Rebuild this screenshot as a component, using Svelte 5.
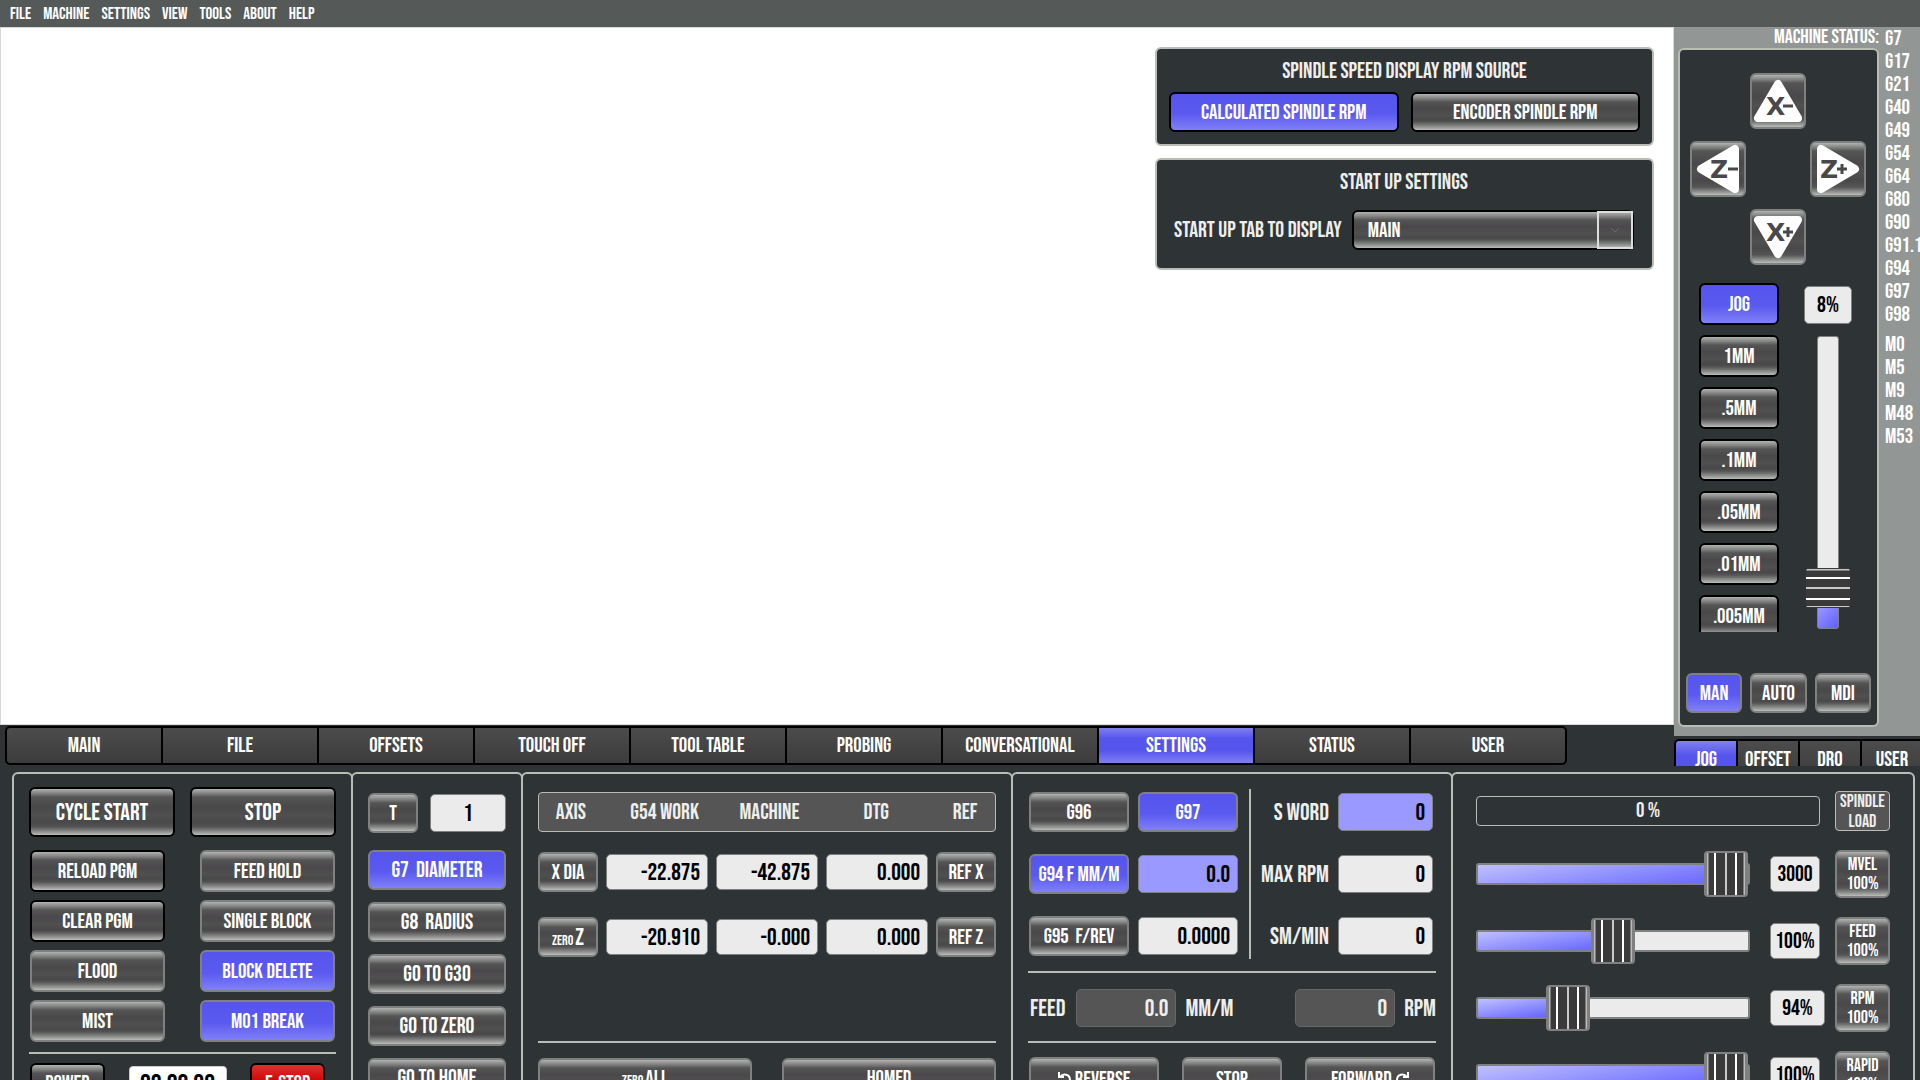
<script>
	let menus = ['File', 'Machine', 'Settings', 'View', 'Tools', 'About', 'Help'];
	let tabs = ['Main', 'File', 'Offsets', 'Touch Off', 'Tool Table', 'Probing', 'Conversational', 'Settings', 'Status', 'User'];
	let sideTabs = ['Jog', 'Offset', 'DRO', 'User'];
	let gcodes = ['G7', 'G17', 'G21', 'G40', 'G49', 'G54', 'G64', 'G80', 'G90', 'G91.1', 'G94', 'G97', 'G98'];
	let mcodes = ['M0', 'M5', 'M9', 'M48', 'M53'];
	let steps = ['Jog', '1mm', '.5mm', '.1mm', '.05mm', '.01mm', '.005mm'];
	let modes = ['Man', 'Auto', 'MDI'];

	let tab = $state('Settings');
	let sideTab = $state('Jog');
	let step = $state('Jog');
	let mode = $state('Man');
	let rpmSource = $state('calculated');
	let startTab = $state('Main');
	let jogSpeed = $state(8);

	let jogKeys = [
		{ name: 'X-', area: 'up', tri: '28,11 8,45 48,45', x: 16, y: 42, sx: 38, sy: 33 },
		{ name: 'Z-', area: 'left', tri: '11,28 45,8 45,48', x: 20, y: 37, sx: 43, sy: 28 },
		{ name: 'Z+', area: 'right', tri: '45,28 11,8 11,48', x: 10, y: 37, sx: 32, sy: 28 },
		{ name: 'X+', area: 'down', tri: '28,45 8,11 48,11', x: 16, y: 32, sx: 38, sy: 23 }
	];

	let programKeys = [
		{ name: 'Reload PGM', dark: true },
		{ name: 'Feed Hold' },
		{ name: 'Clear PGM', dark: true },
		{ name: 'Single Block' },
		{ name: 'Flood' },
		{ name: 'Block Delete', on: true },
		{ name: 'Mist' },
		{ name: 'M01 Break', on: true }
	];

	let toolKeys = [
		{ name: 'G7\u00a0 Diameter', on: true },
		{ name: 'G8\u00a0 Radius' },
		{ name: 'Go to G30' },
		{ name: 'Go to Zero' },
		{ name: 'Go to Home' }
	];

	let axes = [
		{ axis: 'X', work: '-22.875', machine: '-42.875', dtg: '0.000' },
		{ axis: 'Z', work: '-20.910', machine: '-0.000', dtg: '0.000' }
	];

	let overrides = $state([
		{ name: 'MVel', pos: 100, value: '3000' },
		{ name: 'Feed', pos: 50, value: '100%' },
		{ name: 'RPM', pos: 30, value: '94%', wide: true },
		{ name: 'Rapid', pos: 100, value: '100%' }
	]);
</script>

<div class="app">
	<nav class="menubar">
		{#each menus as item}
			<button>{item}</button>
		{/each}
	</nav>

	<div class="upper">
		<main>
			<div class="page">
				<section class="box">
					<h2>Spindle Speed Display RPM Source</h2>
					<div class="source">
						<button class="btn dark" class:on={rpmSource == 'calculated'} onclick={() => (rpmSource = 'calculated')}>Calculated Spindle RPM</button>
						<button class="btn dark" class:on={rpmSource == 'encoder'} onclick={() => (rpmSource = 'encoder')}>Encoder Spindle RPM</button>
					</div>
				</section>
				<section class="box startup">
					<h2>Start Up Settings</h2>
					<div class="field">
						<label for="start-tab">Start Up Tab to Display</label>
						<div class="select">
							<select id="start-tab" class="btn dark" bind:value={startTab}>
								{#each tabs as name}
									<option>{name}</option>
								{/each}
							</select>
							<span class="drop">
								<svg viewBox="0 0 10 6" width="10" height="6"><path d="M1 1l4 4 4-4" fill="none" stroke="#6a6a6a" /></svg>
							</span>
						</div>
					</div>
				</section>
			</div>
			<div class="tabs">
				{#each tabs as name}
					<button class:active={tab == name} onclick={() => (tab = name)}>{name}</button>
				{/each}
			</div>
		</main>

		<aside>
			<div class="side">
				<div class="jog-col">
					<p class="status-label">Machine Status:</p>
					<div class="jog">
						<div class="keys">
							{#each jogKeys as key}
								<button class="btn key {key.area}" aria-label="Jog {key.name}">
									<svg viewBox="2 2 52 52" width="52" height="52">
										<polygon points={key.tri} fill="#fff" stroke="#fff" stroke-width="8" stroke-linejoin="round" />
										<text x={key.x} y={key.y}>{key.name[0]}</text>
										<path d="M{key.sx - 5} {key.sy}h10" />
										{#if key.name[1] == '+'}
											<path d="M{key.sx} {key.sy - 5}v10" />
										{/if}
									</svg>
								</button>
							{/each}
						</div>
						<div class="increments">
							<div class="steps">
								{#each steps as name}
									<button class="btn dark" class:on={step == name} onclick={() => (step = name)}>{name}</button>
								{/each}
							</div>
							<div class="speed">
								<input class="value center" aria-label="Jog speed value" value="{jogSpeed}%" />
								<input class="vslider" type="range" aria-label="Jog speed" bind:value={jogSpeed} style:--pos={jogSpeed} />
							</div>
						</div>
						<div class="modes">
							{#each modes as name}
								<button class="btn" class:on={mode == name} onclick={() => (mode = name)}>{name}</button>
							{/each}
						</div>
					</div>
				</div>
				<div class="codes">
					<ul>
						{#each gcodes as code}<li>{code}</li>{/each}
					</ul>
					<ul>
						{#each mcodes as code}<li>{code}</li>{/each}
					</ul>
				</div>
			</div>
			<div class="side-tabs">
				{#each sideTabs as name}
					<button class:active={sideTab == name} onclick={() => (sideTab = name)}>{name}</button>
				{/each}
			</div>
		</aside>
	</div>

	<div class="lower">
		<section class="panel program">
			<div class="cycle">
				<button class="btn dark big">Cycle Start</button>
				<button class="btn dark big">Stop</button>
			</div>
			<div class="program-keys">
				{#each programKeys as key}
					<button class="btn" class:dark={key.dark} class:on={key.on}>{key.name}</button>
				{/each}
			</div>
			<hr />
			<div class="power">
				<button class="btn dark">Power</button>
				<output class="timer">00:00:00</output>
				<button class="btn dark estop">E-Stop</button>
			</div>
		</section>

		<section class="panel tool">
			<div class="tool-row">
				<button class="btn">T</button>
				<input class="value center" aria-label="Tool number" value="1" />
			</div>
			{#each toolKeys as key}
				<button class="btn" class:on={key.on}>{key.name}</button>
			{/each}
		</section>

		<section class="panel dro">
			<table>
				<thead>
					<tr>
						<th>Axis</th>
						<th>G54 Work</th>
						<th>Machine</th>
						<th>DTG</th>
						<th>Ref</th>
					</tr>
				</thead>
				<tbody>
					{#each axes as row}
						<tr>
							<td>
								<button class="btn">
									{#if row.axis == 'X'}X Dia{:else}<small>Zero</small><span class="z">Z</span>{/if}
								</button>
							</td>
							<td><input class="value" aria-label="{row.axis} work" value={row.work} /></td>
							<td><input class="value" aria-label="{row.axis} machine" value={row.machine} /></td>
							<td><input class="value" aria-label="{row.axis} distance to go" value={row.dtg} /></td>
							<td><button class="btn">Ref {row.axis}</button></td>
						</tr>
					{/each}
				</tbody>
			</table>
			<hr />
			<div class="all">
				<button class="btn"><small>Zero</small>All</button>
				<button class="btn">Homed</button>
			</div>
		</section>

		<section class="panel spindle">
			<div class="spindle-top">
				<div class="feed-modes">
					<button class="btn">G96</button>
					<button class="btn on">G97</button>
					<button class="btn on">G94 F mm/m</button>
					<input class="value lit" aria-label="Feed per minute" value="0.0" />
					<button class="btn">G95&nbsp; F/Rev</button>
					<input class="value" aria-label="Feed per rev" value="0.0000" />
				</div>
				<div class="words">
					<label for="s-word">S Word</label>
					<input id="s-word" class="value lit" value="0" />
					<label for="max-rpm">Max RPM</label>
					<input id="max-rpm" class="value" value="0" />
					<label for="sm-min">SM/Min</label>
					<input id="sm-min" class="value" value="0" />
				</div>
			</div>
			<hr />
			<div class="actual">
				<label for="feed">Feed</label>
				<input id="feed" class="value dim" readonly value="0.0" />
				<span>mm/m</span>
				<input id="rpm" class="value dim" readonly value="0" />
				<label for="rpm">RPM</label>
			</div>
			<hr />
			<div class="direction">
				<button class="btn">
					<svg viewBox="0 0 14 14" width="14" height="14"><path d="M2 5C5 1 12 2 12 8c0 3-2 4-4 5M1 0v5h5" /></svg>
					Reverse
				</button>
				<button class="btn">Stop</button>
				<button class="btn">
					Forward
					<svg viewBox="0 0 14 14" width="14" height="14"><path d="M12 5C9 1 2 2 2 8c0 3 2 4 4 5M13 0v5H8" /></svg>
				</button>
			</div>
		</section>

		<section class="panel overrides">
			<div class="load">
				<div class="bar">0 %</div>
				<div class="load-label">Spindle<br />Load</div>
			</div>
			{#each overrides as item}
				<div class="override">
					<input class="hslider" type="range" aria-label="{item.name} override" bind:value={item.pos} style:--pos={item.pos} />
					<div class="cell">
						<input class="value center" class:wide={item.wide} aria-label="{item.name} value" value={item.value} />
					</div>
					<button class="btn two">{item.name}<br />100%</button>
				</div>
			{/each}
		</section>
	</div>
</div>

<style>
	:global(body) {
		background: #2e3436;
		overflow: hidden;
	}
	.app {
		height: 100vh;
		overflow: hidden;
		display: flex;
		flex-direction: column;
		background: #2e3436;
		color: #eeeeec;
		font-family: 'Bebas Neue', 'Roboto Condensed', 'Liberation Sans', sans-serif;
		font-size: 21px;
		text-transform: uppercase;
	}
	* {
		box-sizing: border-box;
	}
	button,
	input,
	select {
		font: inherit;
		color: inherit;
		text-transform: inherit;
		margin: 0;
		padding: 0;
		min-width: 0;
	}
	h2,
	p,
	ul {
		margin: 0;
		padding: 0;
		list-style: none;
		font-weight: normal;
	}

	/* shared controls */
	.btn {
		height: 40px;
		border: 2px solid #808080;
		border-radius: 6px;
		color: #fff;
		white-space: nowrap;
		background: linear-gradient(#b0b3b0 0, #858785 4px, #555 8px, #4a484a 40%, #505050 58%, #4a484a 72%, #555 calc(100% - 8px), #858785 calc(100% - 4px), #babdb9 100%);
	}
	.btn.dark {
		border-color: #000;
	}
	.btn.on {
		background: linear-gradient(#5555ee, #5a5af0 55%, #8080f8);
	}
	.value {
		height: 38px;
		width: 100%;
		padding: 0 7px;
		border: 1px solid #808080;
		border-radius: 5px;
		background: #ebebeb;
		color: #000;
		font-size: 24px;
		text-align: right;
	}
	.value.center {
		padding: 0;
		text-align: center;
	}
	.value.lit {
		background: #9999ff;
	}
	.value.dim {
		background: #555;
		border-color: #666;
		color: #eeeeec;
	}
	hr {
		height: 2px;
		margin: 0;
		border: 0;
		background: #babdb6;
	}
	small {
		font-size: 14px;
		margin-right: 2px;
	}

	.menubar {
		display: flex;
		flex: none;
		gap: 12px;
		height: 27px;
		padding-left: 10px;
		background: #555a59;
	}
	.menubar button {
		border: 0;
		background: none;
		color: #fff;
		font-size: 17px;
	}

	/* upper half */
	.upper {
		display: flex;
		flex: none;
	}
	main {
		flex: 1;
		display: flex;
		flex-direction: column;
	}
	.page {
		flex: 1;
		display: flex;
		flex-direction: column;
		align-items: flex-end;
		gap: 12px;
		padding: 19px 19px 0 0;
		background: #fff;
		border: 1px solid #d8d8d8;
	}
	.box {
		width: 499px;
		padding: 12px;
		border: 2px solid #babdb6;
		border-radius: 6px;
		background: #2e3436;
		font-size: 22px;
	}
	.box h2 {
		font-size: 22px;
		line-height: 22px;
		text-align: center;
	}
	.box .btn {
		font-size: 21px;
	}
	.source {
		display: grid;
		grid-template-columns: 1fr 1fr;
		gap: 12px;
		margin-top: 9px;
	}
	.startup {
		padding: 12px 18px 18px 17px;
	}
	.field {
		display: flex;
		align-items: center;
		gap: 10px;
		margin-top: 16px;
	}
	.select {
		position: relative;
		flex: 1;
	}
	.select select {
		appearance: none;
		width: 100%;
		padding-left: 14px;
	}
	.drop {
		position: absolute;
		inset: 1px 1px 1px auto;
		width: 36px;
		display: flex;
		align-items: center;
		justify-content: center;
		border: 2px solid #ddd;
		pointer-events: none;
	}
	.tabs {
		display: flex;
		height: 39px;
		margin: 1px 107px 1px 5px;
		border: 2px solid #000;
		border-radius: 5px;
		overflow: hidden;
		background: #000;
		gap: 2px;
	}
	.tabs button,
	.side-tabs button {
		flex: 1 1 0;
		border: 0;
		color: #fff;
		background: linear-gradient(#4c4c4c, #3c3c3c);
	}
	.tabs .active {
		background: linear-gradient(#8080ee, #5555ee 30%, #5555ee 65%, #8080ee);
	}

	aside {
		width: 246px;
		overflow: hidden;
	}
	.side {
		display: flex;
		padding: 0 0 9px 4px;
		background: #929694;
		color: #fff;
	}
	.jog-col {
		width: 201px;
	}
	.status-label {
		height: 21px;
		font-size: 20px;
		line-height: 21px;
		text-align: right;
	}
	.jog {
		padding: 23px 6px 12px;
		border: 2px solid #babdb6;
		border-radius: 6px;
		background: #2e3436;
	}
	.keys {
		display: grid;
		grid-template: '. up .' 56px 'left . right' 56px '. down .' 56px / 56px 56px 56px;
		gap: 12px 4px;
		padding-left: 4px;
	}
	.key {
		height: 56px;
	}
	.key svg {
		display: block;
	}
	.key text {
		font: bold 25px 'DejaVu Sans', sans-serif;
		fill: #4a484a;
	}
	.key path {
		stroke: #4a484a;
		stroke-width: 3;
	}
	.up {
		grid-area: up;
	}
	.left {
		grid-area: left;
	}
	.right {
		grid-area: right;
	}
	.down {
		grid-area: down;
	}
	.increments {
		display: flex;
		justify-content: space-between;
		height: 349px;
		margin: 18px 19px 41px 13px;
		overflow: hidden;
	}
	.steps {
		display: flex;
		flex-direction: column;
		gap: 10px;
		width: 80px;
	}
	.steps .btn {
		flex: none;
		height: 42px;
	}
	.speed {
		width: 48px;
		display: flex;
		flex-direction: column;
		align-items: center;
		gap: 12px;
		padding-top: 3px;
	}
	.speed .value,
	.override .value {
		font-size: 22px;
	}
	.modes {
		display: flex;
		gap: 8px;
	}
	.modes .btn {
		flex: 1;
	}
	.codes {
		padding: 0 0 0 6px;
		width: 41px;
		line-height: 23px;
		white-space: nowrap;
	}
	.codes ul + ul {
		margin-top: 7px;
	}
	.side-tabs {
		display: flex;
		width: 250px;
		height: 27px;
		margin-top: 3px;
		border: 2px solid #000;
		border-bottom: 0;
		border-radius: 5px 0 0 0;
		gap: 2px;
		background: #000;
		overflow: hidden;
	}
	.side-tabs button {
		height: 36px;
	}
	.side-tabs .active {
		background: linear-gradient(#8080ee, #5555ee 40%);
	}

	/* sliders */
	input[type='range'] {
		appearance: none;
		background: none;
	}
	.hslider {
		flex: 1;
		height: 46px;
	}
	.hslider::-webkit-slider-runnable-track {
		height: 22px;
		border: 2px solid #808080;
		border-radius: 3px;
		background: linear-gradient(170deg, #c0c0ff, #5f5fff) no-repeat 0 0 / calc(var(--pos) * 1%) 100% #ebebeb;
	}
	.hslider::-webkit-slider-thumb {
		appearance: none;
		width: 44px;
		height: 46px;
		margin-top: -14px;
		border: 2px solid #808080;
		border-radius: 4px;
		background: linear-gradient(90deg, #808080 1px, #bbb 1px 2px, #3a3a3a 3px 8px, #fff 8px 10px, #3a3a3a 10px 19px, #c8c8c8 19px 21px, #3a3a3a 21px 29px, #fff 29px 31px, #3a3a3a 31px 37px, #bbb 38px 39px, #808080 39px);
	}
	.vslider {
		writing-mode: vertical-lr;
		direction: rtl;
		width: 44px;
		height: 293px;
	}
	.vslider::-webkit-slider-runnable-track {
		width: 22px;
		border: 1px solid #808080;
		border-radius: 3px;
		background: linear-gradient(135deg, #aaaaff, #5f5fff) no-repeat 0 100% / 100% calc(var(--pos) * 1% + 10px) #ebebeb;
	}
	.vslider::-webkit-slider-thumb {
		appearance: none;
		width: 44px;
		height: 40px;
		margin-left: -12px;
		border-radius: 4px;
		background: linear-gradient(#3a3a3a 1px, #c8c8c8 1px 2px, #3a3a3a 3px 9px, #fff 9px 11px, #3a3a3a 11px 19px, #c8c8c8 19px 21px, #3a3a3a 21px 30px, #fff 30px 32px, #3a3a3a 32px 38px, #c8c8c8 38px 39px, #3a3a3a 39px);
	}

	/* lower half */
	.lower {
		flex: none;
		display: grid;
		grid-template-columns: 339fr 170fr 490fr 440fr 464fr;
		padding: 6px 5px 0 12px;
	}
	.panel {
		min-width: 0;
		padding: 13px 15px;
		border: 2px solid #babdb6;
		border-radius: 6px;
	}
	.panel:not(:last-child) {
		margin-right: -2px;
	}
	.cycle {
		display: grid;
		grid-template-columns: 1fr 1fr;
		gap: 15px;
	}
	.big {
		height: 50px;
		font-size: 24px;
	}
	.program-keys {
		display: grid;
		grid-template-columns: 135px 135px;
		justify-content: space-between;
		gap: 8px;
		padding: 13px 1px 10px;
	}
	.program-keys .btn {
		height: 42px;
	}
	.power {
		display: flex;
		justify-content: space-between;
		padding: 9px 11px 0 1px;
	}
	.power .btn {
		width: 75px;
	}
	.power .estop {
		background: linear-gradient(#e03030, #cc0000 50%);
	}
	.timer {
		width: 98px;
		height: 38px;
		margin-top: 3px;
		border: 1px solid #ccc;
		border-radius: 4px;
		background: #fff;
		color: #000;
		font-size: 27px;
		line-height: 36px;
		text-align: center;
	}

	.tool {
		display: flex;
		flex-direction: column;
		gap: 12px;
		padding-top: 19px;
	}
	.tool > .btn {
		font-size: 22px;
	}
	.tool-row {
		display: grid;
		grid-template-columns: 50px 76px;
		justify-content: space-between;
		align-items: center;
		margin-bottom: 5px;
	}

	.dro {
		padding-top: 18px;
	}
	table,
	thead,
	tbody {
		display: block;
	}
	tr {
		display: grid;
		align-items: center;
	}
	th,
	td {
		padding: 0;
		font-weight: normal;
	}
	thead tr {
		grid-template-columns: 64fr 124fr 86fr 128fr 50fr;
		height: 40px;
		padding-right: 5px;
		border: 1px solid #babdb6;
		border-radius: 4px;
		background: #555;
		font-size: 22px;
	}
	tbody {
		display: grid;
		gap: 25px;
		padding: 20px 0 84px;
	}
	tbody tr {
		grid-template-columns: 60px 1fr 1fr 1fr 60px;
		gap: 8px;
	}
	td {
		display: grid;
	}
	td .value {
		height: 36px;
	}
	.z {
		font-size: 24px;
	}
	.all {
		display: grid;
		grid-template-columns: 214fr 214fr;
		gap: 30px;
		padding-top: 15px;
	}

	.spindle {
		padding-top: 15px;
	}
	.spindle-top {
		display: grid;
		grid-template-columns: 223px 1fr;
		padding-bottom: 12px;
	}
	.feed-modes {
		display: grid;
		grid-template-columns: 100px 100px;
		gap: 22px 9px;
		align-items: center;
		padding: 3px 0 3px 1px;
		border-right: 2px solid #babdb6;
	}
	.words {
		display: grid;
		grid-template-columns: 1fr 95px;
		grid-auto-rows: 40px;
		gap: 22px 9px;
		align-items: center;
		padding: 3px 3px 3px 0;
		text-align: right;
		font-size: 24px;
	}
	.actual {
		display: flex;
		align-items: center;
		padding: 16px 0 14px 2px;
		font-size: 24px;
	}
	.actual .value {
		width: 100px;
		margin: 0 9px 0 11px;
	}
	.actual span {
		flex: 1;
	}
	.direction {
		display: grid;
		grid-template-columns: 130px 100px 130px;
		justify-content: space-between;
		padding: 14px 1px 0;
	}
	.direction .btn {
		height: 44px;
	}
	.direction path {
		fill: none;
		stroke: #fff;
		stroke-width: 2;
	}

	.overrides {
		padding: 17px 23px;
	}
	.load,
	.override {
		display: flex;
		align-items: center;
	}
	.load {
		gap: 15px;
	}
	.bar {
		flex: 1;
		height: 30px;
		border: 1px solid #babdb6;
		border-radius: 4px;
		line-height: 28px;
		text-align: center;
	}
	.load-label {
		width: 55px;
		height: 40px;
		border: 1px solid #babdb6;
		border-radius: 4px;
		background: #555;
		font-size: 18px;
		line-height: 20px;
		text-align: center;
	}
	.override {
		gap: 20px;
		margin-top: 19px;
	}
	.cell {
		width: 50px;
		margin-right: -5px;
	}
	.cell .value {
		height: 36px;
	}
	.cell .wide {
		width: 55px;
	}
	.two {
		width: 55px;
		height: 48px;
		font-size: 18px;
		line-height: 19px;
	}
</style>
